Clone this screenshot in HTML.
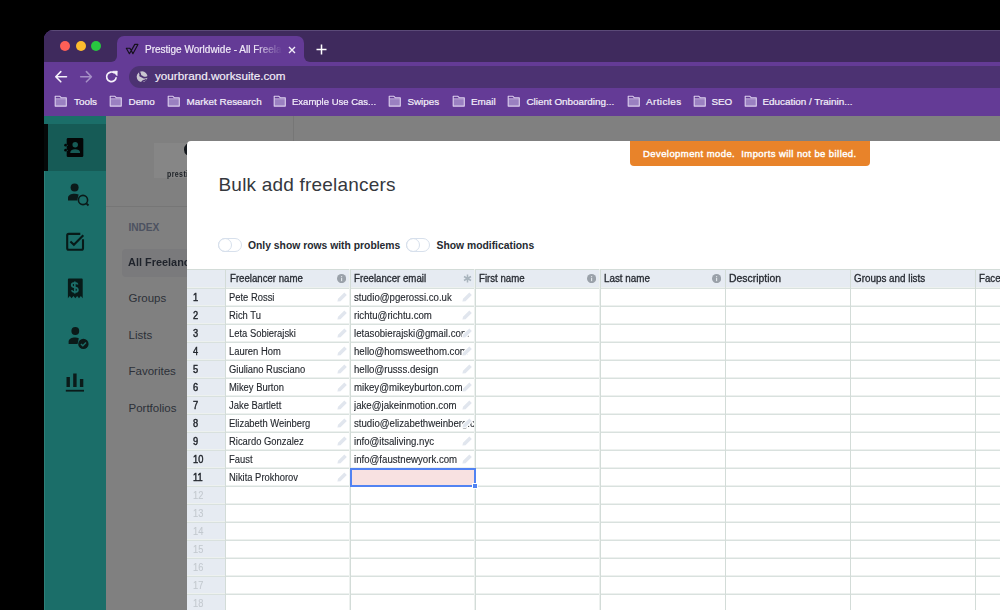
<!DOCTYPE html>
<html><head><meta charset="utf-8">
<style>
*{box-sizing:border-box;margin:0;padding:0}
html,body{width:1000px;height:610px;overflow:hidden;background:#000;font-family:"Liberation Sans",sans-serif}
body{position:relative}
.a{position:absolute}
.t{white-space:nowrap;position:absolute}
.dot{position:absolute;top:41px;width:10px;height:10px;border-radius:50%}
.bm{position:absolute;top:95.5px;color:#f4f0fa;font-size:9.9px;line-height:12px;white-space:nowrap;-webkit-text-stroke:0.2px #f4f0fa}
.hd{position:absolute;top:273px;font-size:10px;line-height:11px;color:#262a31;white-space:nowrap;transform-origin:0 0;-webkit-text-stroke:0.3px #262a31}
.cl{position:absolute;font-size:10px;line-height:11px;color:#25292f;-webkit-text-stroke:0.12px #25292f;white-space:nowrap;transform-origin:0 0}
.rn{position:absolute;left:193.2px;font-size:10.8px;line-height:11px;color:#23272e;-webkit-text-stroke:0.45px #23272e;white-space:nowrap;transform:scaleX(0.86);transform-origin:0 0}
</style></head>
<body>
<div class="a" style="left:44px;top:30px;width:960px;height:600px;border-radius:9px 0 0 0;overflow:hidden;background:#643b96">
  <div class="a" style="left:0;top:0;width:960px;height:32px;background:#3f2a5d"></div>
  <div class="a" style="left:0;top:0;width:960px;height:1px;background:#5b4a78"></div>
</div>
<div class="dot" style="left:60px;background:#fe5f57"></div>
<div class="dot" style="left:75.5px;background:#febc2e"></div>
<div class="dot" style="left:91px;background:#28c840"></div>
<div class="a" style="left:117px;top:36px;width:187px;height:27px;background:#643b96;border-radius:7px 7px 0 0"></div>
<div class="a" style="left:111px;top:56px;width:6px;height:6px;background:#643b96"></div>
<div class="a" style="left:105px;top:50px;width:12px;height:12px;background:#3f2a5d;border-radius:0 0 6px 0"></div>
<div class="a" style="left:304px;top:56px;width:6px;height:6px;background:#643b96"></div>
<div class="a" style="left:304px;top:50px;width:12px;height:12px;background:#3f2a5d;border-radius:0 0 0 6px"></div>
<div class="a" style="left:44px;top:62px;width:960px;height:54px;background:#643b96"></div>
<div class="a" style="left:128.5px;top:66px;width:900px;height:21.8px;border-radius:11px;background:#4c3272"></div>
<svg class="a" style="left:120px;top:38px" width="24" height="20" viewBox="120 38 24 20"><path d="M126.3 48.2L129.4 53.7L131.3 50.6L132.9 53.7L137.9 44.4L134.8 44.4L131.4 50.4L129.7 48.2Z" fill="none" stroke="#15101d" stroke-width="1.15" stroke-linejoin="round"/></svg>
<div class="t" style="left:145px;top:44px;font-size:10px;line-height:12px;color:#efe9f7;-webkit-text-stroke:0.2px #efe9f7;width:140px;overflow:hidden;-webkit-mask-image:linear-gradient(90deg,#000 78%,transparent 98%)">Prestige Worldwide - All Freelancers</div>
<svg class="a" style="left:288px;top:46px" width="8" height="8" viewBox="0 0 8 8"><path d="M1 1L7 7M7 1L1 7" stroke="#f3eef9" stroke-width="1.4"/></svg>
<svg class="a" style="left:316px;top:44px" width="11" height="11" viewBox="0 0 11 11"><path d="M5.5 0.5V10.5M0.5 5.5H10.5" stroke="#fff" stroke-width="1.5"/></svg>
<svg class="a" style="left:54px;top:70px" width="14" height="14" viewBox="54 70 14 14"><path d="M66.5 76.7H56M60.8 71.6L55.8 76.7L60.8 81.8" fill="none" stroke="#f6f2fb" stroke-width="1.6" stroke-linecap="round" stroke-linejoin="round"/></svg>
<svg class="a" style="left:79px;top:70px" width="14" height="14" viewBox="79 70 14 14"><path d="M80.7 76.7H91.2M86.4 71.6L91.4 76.7L86.4 81.8" fill="none" stroke="#a58fc6" stroke-width="1.6" stroke-linecap="round" stroke-linejoin="round"/></svg>
<svg class="a" style="left:104px;top:69px" width="15" height="15" viewBox="104 69 15 15"><path d="M116.2 77.2A4.8 4.8 0 1 1 114.6 73.2" fill="none" stroke="#f6f2fb" stroke-width="1.7"/><path d="M112.6 71.3L117.3 71.1L117.1 75.8Z" fill="#f6f2fb" stroke="#f6f2fb" stroke-width="0.6" stroke-linejoin="round"/></svg>
<svg class="a" style="left:136px;top:71px" width="13" height="13" viewBox="136 71 13 13"><circle cx="142.1" cy="76.7" r="5.4" fill="#c9c6cf"/><path d="M139.8 72.8Q140.6 74.6 140.2 75.6Q141.6 76.2 143.3 77.4Q145 78 147.5 77" fill="none" stroke="#4c3272" stroke-width="1.7" stroke-linecap="round"/><path d="M141.6 82.6Q142.6 80.3 144.2 80.4Q145.2 80.4 146.5 79.4" fill="none" stroke="#4c3272" stroke-width="1.5"/></svg>
<div class="t" style="left:155px;top:68.8px;font-size:11.7px;line-height:13px;color:#f5f1fa;-webkit-text-stroke:0.15px #f5f1fa">yourbrand.worksuite.com</div>
<svg class="a" style="left:54px;top:95px" width="14" height="13" viewBox="0 0 14 13"><path d="M1.2 4.3H12.3V11H1.2Z" fill="#9a80c1"/><path d="M1.2 1.3H5.9L7.2 2.7H12.3V11.1H1.2Z" fill="none" stroke="#dccfee" stroke-width="1.1" stroke-linejoin="round"/><path d="M1.2 3.9H12.3" stroke="#dccfee" stroke-width="0.9"/></svg>
<div class="bm" style="left:74px;">Tools</div>
<svg class="a" style="left:109px;top:95px" width="14" height="13" viewBox="0 0 14 13"><path d="M1.2 4.3H12.3V11H1.2Z" fill="#9a80c1"/><path d="M1.2 1.3H5.9L7.2 2.7H12.3V11.1H1.2Z" fill="none" stroke="#dccfee" stroke-width="1.1" stroke-linejoin="round"/><path d="M1.2 3.9H12.3" stroke="#dccfee" stroke-width="0.9"/></svg>
<div class="bm" style="left:128.5px;">Demo</div>
<svg class="a" style="left:167px;top:95px" width="14" height="13" viewBox="0 0 14 13"><path d="M1.2 4.3H12.3V11H1.2Z" fill="#9a80c1"/><path d="M1.2 1.3H5.9L7.2 2.7H12.3V11.1H1.2Z" fill="none" stroke="#dccfee" stroke-width="1.1" stroke-linejoin="round"/><path d="M1.2 3.9H12.3" stroke="#dccfee" stroke-width="0.9"/></svg>
<div class="bm" style="left:186.6px;">Market Research</div>
<svg class="a" style="left:272.6px;top:95px" width="14" height="13" viewBox="0 0 14 13"><path d="M1.2 4.3H12.3V11H1.2Z" fill="#9a80c1"/><path d="M1.2 1.3H5.9L7.2 2.7H12.3V11.1H1.2Z" fill="none" stroke="#dccfee" stroke-width="1.1" stroke-linejoin="round"/><path d="M1.2 3.9H12.3" stroke="#dccfee" stroke-width="0.9"/></svg>
<div class="bm" style="left:292px;transform:scaleX(0.963);transform-origin:0 0">Example Use Cas...</div>
<svg class="a" style="left:388px;top:95px" width="14" height="13" viewBox="0 0 14 13"><path d="M1.2 4.3H12.3V11H1.2Z" fill="#9a80c1"/><path d="M1.2 1.3H5.9L7.2 2.7H12.3V11.1H1.2Z" fill="none" stroke="#dccfee" stroke-width="1.1" stroke-linejoin="round"/><path d="M1.2 3.9H12.3" stroke="#dccfee" stroke-width="0.9"/></svg>
<div class="bm" style="left:407.4px;">Swipes</div>
<svg class="a" style="left:452px;top:95px" width="14" height="13" viewBox="0 0 14 13"><path d="M1.2 4.3H12.3V11H1.2Z" fill="#9a80c1"/><path d="M1.2 1.3H5.9L7.2 2.7H12.3V11.1H1.2Z" fill="none" stroke="#dccfee" stroke-width="1.1" stroke-linejoin="round"/><path d="M1.2 3.9H12.3" stroke="#dccfee" stroke-width="0.9"/></svg>
<div class="bm" style="left:471px;">Email</div>
<svg class="a" style="left:507px;top:95px" width="14" height="13" viewBox="0 0 14 13"><path d="M1.2 4.3H12.3V11H1.2Z" fill="#9a80c1"/><path d="M1.2 1.3H5.9L7.2 2.7H12.3V11.1H1.2Z" fill="none" stroke="#dccfee" stroke-width="1.1" stroke-linejoin="round"/><path d="M1.2 3.9H12.3" stroke="#dccfee" stroke-width="0.9"/></svg>
<div class="bm" style="left:526.4px;">Client Onboarding...</div>
<svg class="a" style="left:627px;top:95px" width="14" height="13" viewBox="0 0 14 13"><path d="M1.2 4.3H12.3V11H1.2Z" fill="#9a80c1"/><path d="M1.2 1.3H5.9L7.2 2.7H12.3V11.1H1.2Z" fill="none" stroke="#dccfee" stroke-width="1.1" stroke-linejoin="round"/><path d="M1.2 3.9H12.3" stroke="#dccfee" stroke-width="0.9"/></svg>
<div class="bm" style="left:646px;letter-spacing:0.4px">Articles</div>
<svg class="a" style="left:693px;top:95px" width="14" height="13" viewBox="0 0 14 13"><path d="M1.2 4.3H12.3V11H1.2Z" fill="#9a80c1"/><path d="M1.2 1.3H5.9L7.2 2.7H12.3V11.1H1.2Z" fill="none" stroke="#dccfee" stroke-width="1.1" stroke-linejoin="round"/><path d="M1.2 3.9H12.3" stroke="#dccfee" stroke-width="0.9"/></svg>
<div class="bm" style="left:711.4px;">SEO</div>
<svg class="a" style="left:743.5px;top:95px" width="14" height="13" viewBox="0 0 14 13"><path d="M1.2 4.3H12.3V11H1.2Z" fill="#9a80c1"/><path d="M1.2 1.3H5.9L7.2 2.7H12.3V11.1H1.2Z" fill="none" stroke="#dccfee" stroke-width="1.1" stroke-linejoin="round"/><path d="M1.2 3.9H12.3" stroke="#dccfee" stroke-width="0.9"/></svg>
<div class="bm" style="left:762.4px;">Education / Trainin...</div>
<div class="a" style="left:106px;top:116px;width:900px;height:500px;background:#808080"></div>
<div class="a" style="left:44px;top:116px;width:62px;height:500px;background:#1b6e69"></div>
<div class="a" style="left:44px;top:124px;width:62px;height:47px;background:#165b56"></div>
<div class="a" style="left:44px;top:171px;width:1px;height:500px;background:#2d8079"></div>
<div class="a" style="left:44px;top:124px;width:3.5px;height:47px;background:#050808"></div>
<div class="a" style="left:293px;top:116px;width:1px;height:500px;background:#767676"></div>
<div class="a" style="left:106px;top:206px;width:187px;height:1px;background:#767676"></div>
<div class="a" style="left:154px;top:143px;width:40px;height:35px;background:#868686"></div>
<div class="a" style="left:183.8px;top:142.3px;width:16px;height:14.6px;border-radius:50%;border:3px solid #15191e;background:#868686"></div>
<div class="t" style="left:166.8px;top:168.5px;font-size:9px;line-height:10px;font-weight:bold;color:#1e2227;letter-spacing:0.5px;transform:scaleX(0.78);transform-origin:0 0">prestige</div>
<div class="t" style="left:128.5px;top:222px;font-size:10.2px;line-height:11px;font-weight:bold;color:#4d5260;letter-spacing:-0.1px">INDEX</div>
<div class="a" style="left:122px;top:249px;width:80px;height:28px;border-radius:4px;background:#7a7a7c"></div>
<div class="t" style="left:127.6px;top:256px;font-size:11.5px;line-height:12px;font-weight:bold;color:#1f232b;transform:scaleX(0.95);transform-origin:0 0">All Freelancers</div>
<div class="t" style="left:128.5px;top:292px;font-size:11.5px;line-height:12px;color:#2c3038">Groups</div>
<div class="t" style="left:128.5px;top:329px;font-size:11.5px;line-height:12px;color:#2c3038">Lists</div>
<div class="t" style="left:128.5px;top:365px;font-size:11.5px;line-height:12px;color:#2c3038">Favorites</div>
<div class="t" style="left:128.5px;top:402px;font-size:11.5px;line-height:12px;color:#2c3038">Portfolios</div>
<svg class="a" style="left:60px;top:130px" width="32" height="32" viewBox="60 130 32 32">
 <rect x="66.7" y="138.1" width="16.6" height="18.9" rx="1.3" fill="#030606"/>
 <circle cx="65.6" cy="145.2" r="1.35" fill="#030606"/><circle cx="65.6" cy="150.2" r="1.35" fill="#030606"/>
 <circle cx="67.3" cy="145.2" r="0.55" fill="#165b56"/><circle cx="67.3" cy="150.2" r="0.55" fill="#165b56"/>
 <circle cx="75.2" cy="144.7" r="2.75" fill="#165b56"/>
 <path d="M70.3 153.1V152.3C70.3 150.3 72.5 149.2 75.15 149.2S80 150.3 80 152.3V153.1Z" fill="#165b56"/>
</svg>
<svg class="a" style="left:64px;top:181px" width="26" height="26" viewBox="0 0 26 26">
 <circle cx="10.6" cy="6.5" r="4" fill="#0b1a19"/>
 <path d="M4 19.5V17C4 14.2 7 12.8 10.6 12.8C12 12.8 13.5 13.1 14.6 13.6L13.2 19.5Z" fill="#0b1a19"/>
 <circle cx="19" cy="19" r="4.6" fill="none" stroke="#0b1a19" stroke-width="1.6"/>
 <path d="M22.3 22.3L24.5 24.5" stroke="#0b1a19" stroke-width="1.8"/>
</svg>
<svg class="a" style="left:60px;top:226px" width="32" height="32" viewBox="60 226 32 32">
 <path d="M80.3 233.9H68.7Q67.2 233.9 67.2 235.4V248.2Q67.2 249.7 68.7 249.7H81.5Q83 249.7 83 248.2V239.2" fill="none" stroke="#071a18" stroke-width="2.1"/>
 <path d="M70.4 241.4L73.9 244.8L83.3 235.3" fill="none" stroke="#071a18" stroke-width="2.1"/>
</svg>
<svg class="a" style="left:60px;top:272px" width="32" height="32" viewBox="60 272 32 32">
 <path d="M68.9 278.6H81.7Q82.7 278.6 82.7 279.6V298.2L80.85 296L79 298.2L77.15 296L75.3 298.2L73.45 296L71.6 298.2L69.75 296L67.9 298.2V279.6Q67.9 278.6 68.9 278.6Z" fill="#071a18"/>
 <path d="M77.7 284.5Q77.2 282.9 74.8 282.9Q71.7 282.9 71.7 285.1Q71.7 287 74.8 287.4Q77.9 287.8 77.9 290Q77.9 292 74.8 292Q72.3 292 71.6 290.2M74.8 281.4V293.6" fill="none" stroke="#1b6e69" stroke-width="1.75"/>
</svg>
<svg class="a" style="left:63.5px;top:324px" width="26" height="26" viewBox="0 0 26 26">
 <circle cx="11.3" cy="7" r="3.9" fill="#0b1a19"/>
 <path d="M4.6 20V17.8C4.6 15 7.6 13.6 11.3 13.6C12.6 13.6 13.8 13.8 14.8 14.2L13.6 20Z" fill="#0b1a19"/>
 <circle cx="19.4" cy="19.9" r="5.2" fill="#0b1a19"/>
 <path d="M16.9 20L18.8 21.8L22 18.4" fill="none" stroke="#1b6e69" stroke-width="1.4"/>
</svg>
<svg class="a" style="left:64px;top:371px" width="22" height="22" viewBox="0 0 22 22">
 <rect x="2.5" y="6" width="3.4" height="10" fill="#0b1a19"/>
 <rect x="9.2" y="2.5" width="3.4" height="13.5" fill="#0b1a19"/>
 <rect x="15.9" y="8" width="3.4" height="8" fill="#0b1a19"/>
 <rect x="1.8" y="18.8" width="18.2" height="1.8" fill="#0b1a19"/>
</svg>
<div class="a" style="left:187px;top:141px;width:900px;height:500px;background:#fff;border-radius:4px 0 0 0"></div>
<div class="a" style="left:630px;top:141px;width:240px;height:24.5px;background:#e8832a;border-radius:0 0 4px 4px"></div>
<div class="t" style="left:643px;top:147.5px;font-size:9.5px;line-height:11px;color:#fff;-webkit-text-stroke:0.4px #fff;letter-spacing:0.42px">Development mode.&nbsp; Imports will not be billed.</div>
<div class="t" style="left:218.5px;top:175px;font-size:19px;line-height:20px;color:#35383d;letter-spacing:0.2px">Bulk add freelancers</div>
<div class="a" style="left:218px;top:238px;width:24px;height:14px;border:1.6px solid #d7e0ec;border-radius:7px"></div>
<div class="a" style="left:218px;top:238px;width:14px;height:14px;border:1.6px solid #d7e0ec;border-radius:50%"></div>
<div class="t" style="left:248px;top:240px;font-size:10.35px;line-height:11px;font-weight:bold;color:#262a31">Only show rows with problems</div>
<div class="a" style="left:406px;top:238px;width:24px;height:14px;border:1.6px solid #d7e0ec;border-radius:7px"></div>
<div class="a" style="left:406px;top:238px;width:14px;height:14px;border:1.6px solid #d7e0ec;border-radius:50%"></div>
<div class="t" style="left:436.5px;top:240px;font-size:10.35px;line-height:11px;font-weight:bold;color:#262a31">Show modifications</div>
<div class="a" style="left:187px;top:269px;width:900px;height:19px;background:#e6ebf2"></div>
<div class="a" style="left:187px;top:288px;width:38.5px;height:400px;background:#e6ebf2"></div>
<div class="a" style="left:187px;top:269px;width:900px;height:1px;background:#d3dcd8"></div>
<div class="a" style="left:187px;top:287px;width:900px;height:1px;background:#edf1ef"></div>
<div class="a" style="left:187px;top:288px;width:900px;height:1px;background:#d9e1de"></div>
<div class="a" style="left:187px;top:305px;width:900px;height:1px;background:#edf1ef"></div>
<div class="a" style="left:187px;top:306px;width:900px;height:1px;background:#d9e1de"></div>
<div class="a" style="left:187px;top:323px;width:900px;height:1px;background:#edf1ef"></div>
<div class="a" style="left:187px;top:324px;width:900px;height:1px;background:#d9e1de"></div>
<div class="a" style="left:187px;top:341px;width:900px;height:1px;background:#edf1ef"></div>
<div class="a" style="left:187px;top:342px;width:900px;height:1px;background:#d9e1de"></div>
<div class="a" style="left:187px;top:359px;width:900px;height:1px;background:#edf1ef"></div>
<div class="a" style="left:187px;top:360px;width:900px;height:1px;background:#d9e1de"></div>
<div class="a" style="left:187px;top:377px;width:900px;height:1px;background:#edf1ef"></div>
<div class="a" style="left:187px;top:378px;width:900px;height:1px;background:#d9e1de"></div>
<div class="a" style="left:187px;top:395px;width:900px;height:1px;background:#edf1ef"></div>
<div class="a" style="left:187px;top:396px;width:900px;height:1px;background:#d9e1de"></div>
<div class="a" style="left:187px;top:413px;width:900px;height:1px;background:#edf1ef"></div>
<div class="a" style="left:187px;top:414px;width:900px;height:1px;background:#d9e1de"></div>
<div class="a" style="left:187px;top:431px;width:900px;height:1px;background:#edf1ef"></div>
<div class="a" style="left:187px;top:432px;width:900px;height:1px;background:#d9e1de"></div>
<div class="a" style="left:187px;top:449px;width:900px;height:1px;background:#edf1ef"></div>
<div class="a" style="left:187px;top:450px;width:900px;height:1px;background:#d9e1de"></div>
<div class="a" style="left:187px;top:467px;width:900px;height:1px;background:#edf1ef"></div>
<div class="a" style="left:187px;top:468px;width:900px;height:1px;background:#d9e1de"></div>
<div class="a" style="left:187px;top:485px;width:900px;height:1px;background:#edf1ef"></div>
<div class="a" style="left:187px;top:486px;width:900px;height:1px;background:#d9e1de"></div>
<div class="a" style="left:187px;top:503px;width:900px;height:1px;background:#edf1ef"></div>
<div class="a" style="left:187px;top:504px;width:900px;height:1px;background:#d9e1de"></div>
<div class="a" style="left:187px;top:521px;width:900px;height:1px;background:#edf1ef"></div>
<div class="a" style="left:187px;top:522px;width:900px;height:1px;background:#d9e1de"></div>
<div class="a" style="left:187px;top:539px;width:900px;height:1px;background:#edf1ef"></div>
<div class="a" style="left:187px;top:540px;width:900px;height:1px;background:#d9e1de"></div>
<div class="a" style="left:187px;top:557px;width:900px;height:1px;background:#edf1ef"></div>
<div class="a" style="left:187px;top:558px;width:900px;height:1px;background:#d9e1de"></div>
<div class="a" style="left:187px;top:575px;width:900px;height:1px;background:#edf1ef"></div>
<div class="a" style="left:187px;top:576px;width:900px;height:1px;background:#d9e1de"></div>
<div class="a" style="left:187px;top:593px;width:900px;height:1px;background:#edf1ef"></div>
<div class="a" style="left:187px;top:594px;width:900px;height:1px;background:#d9e1de"></div>
<div class="a" style="left:187px;top:611px;width:900px;height:1px;background:#edf1ef"></div>
<div class="a" style="left:187px;top:612px;width:900px;height:1px;background:#d9e1de"></div>
<div class="a" style="left:225px;top:269px;width:1px;height:400px;background:#d3dcd8"></div>
<div class="a" style="left:349px;top:269px;width:1px;height:400px;background:#edf1ef"></div>
<div class="a" style="left:350px;top:269px;width:1px;height:400px;background:#d3dcd8"></div>
<div class="a" style="left:474px;top:269px;width:1px;height:400px;background:#edf1ef"></div>
<div class="a" style="left:475px;top:269px;width:1px;height:400px;background:#d3dcd8"></div>
<div class="a" style="left:599px;top:269px;width:1px;height:400px;background:#edf1ef"></div>
<div class="a" style="left:600px;top:269px;width:1px;height:400px;background:#d3dcd8"></div>
<div class="a" style="left:725px;top:269px;width:1px;height:400px;background:#d3dcd8"></div>
<div class="a" style="left:850px;top:269px;width:1px;height:400px;background:#d3dcd8"></div>
<div class="a" style="left:975px;top:269px;width:1px;height:400px;background:#d3dcd8"></div>
<div class="hd" style="left:229.70000000000002px;transform:scaleX(0.963)">Freelancer name</div>
<svg class="a" style="left:337.3px;top:273.9px" width="9.2" height="9.2" viewBox="0 0 9 9"><circle cx="4.5" cy="4.5" r="4.5" fill="#9aa1a9"/><rect x="3.95" y="3.9" width="1.1" height="3.1" fill="#e4e8ec"/><circle cx="4.5" cy="2.6" r="0.65" fill="#e4e8ec"/></svg>
<div class="hd" style="left:354.4px;transform:scaleX(0.968)">Freelancer email</div>
<svg class="a" style="left:462.7px;top:274px" width="9" height="9" viewBox="0 0 10 10"><path d="M5 0.5V9.5M1.1 2.75L8.9 7.25M1.1 7.25L8.9 2.75" stroke="#a9b4bd" stroke-width="1.7"/></svg>
<div class="hd" style="left:479.4px;transform:scaleX(0.967)">First name</div>
<svg class="a" style="left:587.3px;top:273.9px" width="9.2" height="9.2" viewBox="0 0 9 9"><circle cx="4.5" cy="4.5" r="4.5" fill="#9aa1a9"/><rect x="3.95" y="3.9" width="1.1" height="3.1" fill="#e4e8ec"/><circle cx="4.5" cy="2.6" r="0.65" fill="#e4e8ec"/></svg>
<div class="hd" style="left:604.4px;transform:scaleX(0.983)">Last name</div>
<svg class="a" style="left:712.3px;top:273.9px" width="9.2" height="9.2" viewBox="0 0 9 9"><circle cx="4.5" cy="4.5" r="4.5" fill="#9aa1a9"/><rect x="3.95" y="3.9" width="1.1" height="3.1" fill="#e4e8ec"/><circle cx="4.5" cy="2.6" r="0.65" fill="#e4e8ec"/></svg>
<div class="hd" style="left:729.4px;transform:scaleX(1.04)">Description</div>
<div class="hd" style="left:854.4px;transform:scaleX(0.985)">Groups and lists</div>
<div class="hd" style="left:979.4px;transform:scaleX(0.97)">Facebook</div>
<div class="rn" style="top:291.7px">1</div>
<div class="cl" style="left:229.4px;top:292px;transform:scaleX(0.94)">Pete Rossi</div>
<svg class="a" style="left:337px;top:292px" width="11" height="11" viewBox="0 0 11 11"><path d="M0.4 9.6L1.0 6.8L7.3 0.5L9.8 3.0L3.5 9.3Z" fill="#e1e6ee" stroke="#fff" stroke-width="2.2" stroke-linejoin="round" paint-order="stroke"/></svg>
<div class="a" style="left:354px;top:292px;width:120px;height:12px;overflow:hidden"><div class="cl" style="left:0;top:0;transform:scaleX(0.965)">studio@pgerossi.co.uk</div></div>
<svg class="a" style="left:462px;top:292px" width="11" height="11" viewBox="0 0 11 11"><path d="M0.4 9.6L1.0 6.8L7.3 0.5L9.8 3.0L3.5 9.3Z" fill="#e1e6ee" stroke="#fff" stroke-width="2.2" stroke-linejoin="round" paint-order="stroke"/></svg>
<div class="rn" style="top:309.7px">2</div>
<div class="cl" style="left:229.4px;top:310px;transform:scaleX(0.94)">Rich Tu</div>
<svg class="a" style="left:337px;top:310px" width="11" height="11" viewBox="0 0 11 11"><path d="M0.4 9.6L1.0 6.8L7.3 0.5L9.8 3.0L3.5 9.3Z" fill="#e1e6ee" stroke="#fff" stroke-width="2.2" stroke-linejoin="round" paint-order="stroke"/></svg>
<div class="a" style="left:354px;top:310px;width:120px;height:12px;overflow:hidden"><div class="cl" style="left:0;top:0;transform:scaleX(0.965)">richtu@richtu.com</div></div>
<svg class="a" style="left:462px;top:310px" width="11" height="11" viewBox="0 0 11 11"><path d="M0.4 9.6L1.0 6.8L7.3 0.5L9.8 3.0L3.5 9.3Z" fill="#e1e6ee" stroke="#fff" stroke-width="2.2" stroke-linejoin="round" paint-order="stroke"/></svg>
<div class="rn" style="top:327.7px">3</div>
<div class="cl" style="left:229.4px;top:328px;transform:scaleX(0.94)">Leta Sobierajski</div>
<svg class="a" style="left:337px;top:328px" width="11" height="11" viewBox="0 0 11 11"><path d="M0.4 9.6L1.0 6.8L7.3 0.5L9.8 3.0L3.5 9.3Z" fill="#e1e6ee" stroke="#fff" stroke-width="2.2" stroke-linejoin="round" paint-order="stroke"/></svg>
<div class="a" style="left:354px;top:328px;width:120px;height:12px;overflow:hidden"><div class="cl" style="left:0;top:0;transform:scaleX(0.965)">letasobierajski@gmail.com</div></div>
<svg class="a" style="left:462px;top:328px" width="11" height="11" viewBox="0 0 11 11"><path d="M0.4 9.6L1.0 6.8L7.3 0.5L9.8 3.0L3.5 9.3Z" fill="#e1e6ee" stroke="#fff" stroke-width="2.2" stroke-linejoin="round" paint-order="stroke"/></svg>
<div class="rn" style="top:345.7px">4</div>
<div class="cl" style="left:229.4px;top:346px;transform:scaleX(0.94)">Lauren Hom</div>
<svg class="a" style="left:337px;top:346px" width="11" height="11" viewBox="0 0 11 11"><path d="M0.4 9.6L1.0 6.8L7.3 0.5L9.8 3.0L3.5 9.3Z" fill="#e1e6ee" stroke="#fff" stroke-width="2.2" stroke-linejoin="round" paint-order="stroke"/></svg>
<div class="a" style="left:354px;top:346px;width:120px;height:12px;overflow:hidden"><div class="cl" style="left:0;top:0;transform:scaleX(0.965)">hello@homsweethom.com</div></div>
<svg class="a" style="left:462px;top:346px" width="11" height="11" viewBox="0 0 11 11"><path d="M0.4 9.6L1.0 6.8L7.3 0.5L9.8 3.0L3.5 9.3Z" fill="#e1e6ee" stroke="#fff" stroke-width="2.2" stroke-linejoin="round" paint-order="stroke"/></svg>
<div class="rn" style="top:363.7px">5</div>
<div class="cl" style="left:229.4px;top:364px;transform:scaleX(0.94)">Giuliano Rusciano</div>
<svg class="a" style="left:337px;top:364px" width="11" height="11" viewBox="0 0 11 11"><path d="M0.4 9.6L1.0 6.8L7.3 0.5L9.8 3.0L3.5 9.3Z" fill="#e1e6ee" stroke="#fff" stroke-width="2.2" stroke-linejoin="round" paint-order="stroke"/></svg>
<div class="a" style="left:354px;top:364px;width:120px;height:12px;overflow:hidden"><div class="cl" style="left:0;top:0;transform:scaleX(0.965)">hello@russs.design</div></div>
<svg class="a" style="left:462px;top:364px" width="11" height="11" viewBox="0 0 11 11"><path d="M0.4 9.6L1.0 6.8L7.3 0.5L9.8 3.0L3.5 9.3Z" fill="#e1e6ee" stroke="#fff" stroke-width="2.2" stroke-linejoin="round" paint-order="stroke"/></svg>
<div class="rn" style="top:381.7px">6</div>
<div class="cl" style="left:229.4px;top:382px;transform:scaleX(0.94)">Mikey Burton</div>
<svg class="a" style="left:337px;top:382px" width="11" height="11" viewBox="0 0 11 11"><path d="M0.4 9.6L1.0 6.8L7.3 0.5L9.8 3.0L3.5 9.3Z" fill="#e1e6ee" stroke="#fff" stroke-width="2.2" stroke-linejoin="round" paint-order="stroke"/></svg>
<div class="a" style="left:354px;top:382px;width:120px;height:12px;overflow:hidden"><div class="cl" style="left:0;top:0;transform:scaleX(0.965)">mikey@mikeyburton.com</div></div>
<svg class="a" style="left:462px;top:382px" width="11" height="11" viewBox="0 0 11 11"><path d="M0.4 9.6L1.0 6.8L7.3 0.5L9.8 3.0L3.5 9.3Z" fill="#e1e6ee" stroke="#fff" stroke-width="2.2" stroke-linejoin="round" paint-order="stroke"/></svg>
<div class="rn" style="top:399.7px">7</div>
<div class="cl" style="left:229.4px;top:400px;transform:scaleX(0.94)">Jake Bartlett</div>
<svg class="a" style="left:337px;top:400px" width="11" height="11" viewBox="0 0 11 11"><path d="M0.4 9.6L1.0 6.8L7.3 0.5L9.8 3.0L3.5 9.3Z" fill="#e1e6ee" stroke="#fff" stroke-width="2.2" stroke-linejoin="round" paint-order="stroke"/></svg>
<div class="a" style="left:354px;top:400px;width:120px;height:12px;overflow:hidden"><div class="cl" style="left:0;top:0;transform:scaleX(0.965)">jake@jakeinmotion.com</div></div>
<svg class="a" style="left:462px;top:400px" width="11" height="11" viewBox="0 0 11 11"><path d="M0.4 9.6L1.0 6.8L7.3 0.5L9.8 3.0L3.5 9.3Z" fill="#e1e6ee" stroke="#fff" stroke-width="2.2" stroke-linejoin="round" paint-order="stroke"/></svg>
<div class="rn" style="top:417.7px">8</div>
<div class="cl" style="left:229.4px;top:418px;transform:scaleX(0.94)">Elizabeth Weinberg</div>
<svg class="a" style="left:337px;top:418px" width="11" height="11" viewBox="0 0 11 11"><path d="M0.4 9.6L1.0 6.8L7.3 0.5L9.8 3.0L3.5 9.3Z" fill="#e1e6ee" stroke="#fff" stroke-width="2.2" stroke-linejoin="round" paint-order="stroke"/></svg>
<div class="a" style="left:354px;top:418px;width:120px;height:12px;overflow:hidden"><div class="cl" style="left:0;top:0;transform:scaleX(0.965)">studio@elizabethweinberg.com</div></div>
<svg class="a" style="left:462px;top:418px" width="11" height="11" viewBox="0 0 11 11"><path d="M0.4 9.6L1.0 6.8L7.3 0.5L9.8 3.0L3.5 9.3Z" fill="#e1e6ee" stroke="#fff" stroke-width="2.2" stroke-linejoin="round" paint-order="stroke"/></svg>
<div class="rn" style="top:435.7px">9</div>
<div class="cl" style="left:229.4px;top:436px;transform:scaleX(0.94)">Ricardo Gonzalez</div>
<svg class="a" style="left:337px;top:436px" width="11" height="11" viewBox="0 0 11 11"><path d="M0.4 9.6L1.0 6.8L7.3 0.5L9.8 3.0L3.5 9.3Z" fill="#e1e6ee" stroke="#fff" stroke-width="2.2" stroke-linejoin="round" paint-order="stroke"/></svg>
<div class="a" style="left:354px;top:436px;width:120px;height:12px;overflow:hidden"><div class="cl" style="left:0;top:0;transform:scaleX(0.965)">info@itsaliving.nyc</div></div>
<svg class="a" style="left:462px;top:436px" width="11" height="11" viewBox="0 0 11 11"><path d="M0.4 9.6L1.0 6.8L7.3 0.5L9.8 3.0L3.5 9.3Z" fill="#e1e6ee" stroke="#fff" stroke-width="2.2" stroke-linejoin="round" paint-order="stroke"/></svg>
<div class="rn" style="top:453.7px">10</div>
<div class="cl" style="left:229.4px;top:454px;transform:scaleX(0.94)">Faust</div>
<svg class="a" style="left:337px;top:454px" width="11" height="11" viewBox="0 0 11 11"><path d="M0.4 9.6L1.0 6.8L7.3 0.5L9.8 3.0L3.5 9.3Z" fill="#e1e6ee" stroke="#fff" stroke-width="2.2" stroke-linejoin="round" paint-order="stroke"/></svg>
<div class="a" style="left:354px;top:454px;width:120px;height:12px;overflow:hidden"><div class="cl" style="left:0;top:0;transform:scaleX(0.965)">info@faustnewyork.com</div></div>
<svg class="a" style="left:462px;top:454px" width="11" height="11" viewBox="0 0 11 11"><path d="M0.4 9.6L1.0 6.8L7.3 0.5L9.8 3.0L3.5 9.3Z" fill="#e1e6ee" stroke="#fff" stroke-width="2.2" stroke-linejoin="round" paint-order="stroke"/></svg>
<div class="rn" style="top:471.7px">11</div>
<div class="cl" style="left:229.4px;top:472px;transform:scaleX(0.94)">Nikita Prokhorov</div>
<svg class="a" style="left:337px;top:472px" width="11" height="11" viewBox="0 0 11 11"><path d="M0.4 9.6L1.0 6.8L7.3 0.5L9.8 3.0L3.5 9.3Z" fill="#e1e6ee" stroke="#fff" stroke-width="2.2" stroke-linejoin="round" paint-order="stroke"/></svg>
<div class="rn" style="top:489.7px;color:#c3c9cf;-webkit-text-stroke:0.1px #c3c9cf">12</div>
<div class="rn" style="top:507.7px;color:#c3c9cf;-webkit-text-stroke:0.1px #c3c9cf">13</div>
<div class="rn" style="top:525.7px;color:#c3c9cf;-webkit-text-stroke:0.1px #c3c9cf">14</div>
<div class="rn" style="top:543.7px;color:#c3c9cf;-webkit-text-stroke:0.1px #c3c9cf">15</div>
<div class="rn" style="top:561.7px;color:#c3c9cf;-webkit-text-stroke:0.1px #c3c9cf">16</div>
<div class="rn" style="top:579.7px;color:#c3c9cf;-webkit-text-stroke:0.1px #c3c9cf">17</div>
<div class="rn" style="top:597.7px;color:#c3c9cf;-webkit-text-stroke:0.1px #c3c9cf">18</div>
<div class="a" style="left:350px;top:468px;width:126px;height:18.5px;background:#f8e1e1;border:2px solid #5283f2"></div>
<div class="a" style="left:472px;top:482.5px;width:6px;height:6px;background:#5283f2;border:1px solid #fff"></div>
</body></html>
